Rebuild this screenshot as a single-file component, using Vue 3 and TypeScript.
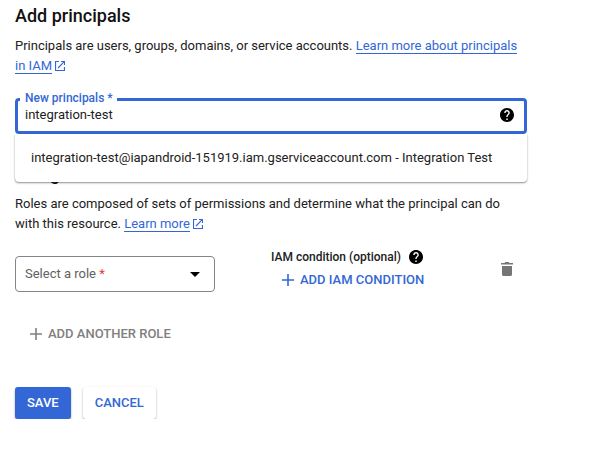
<script setup lang="ts">
import { ref } from 'vue'

const principal = ref<string>('integration-test')
const suggestions: string[] = [
  'integration-test@iapandroid-151919.iam.gserviceaccount.com - Integration Test',
]
</script>

<template>
  <main class="panel">
    <h2 class="title">Add principals</h2>
    <p class="copy intro">
      Principals are users, groups, domains, or service accounts.
      <a class="link">Learn more about principals in IAM</a>
      <svg class="external" viewBox="0 0 10 10"><path d="M4 .5H.5v9h9V6M6 .5h3.500V4M9.300.7 3 7" /></svg>
    </p>

    <div class="field">
      <label class="field-label">New principals *</label>
      <span class="field-value">{{ principal }}</span>
      <svg class="help" viewBox="2 2 20 20"><path d="M12 2C6.480 2 2 6.480 2 12s4.480 10 10 10 10-4.480 10-10S17.520 2 12 2zm1 17h-2v-2h2v2zm2.070-7.750l-.9.920C13.450 12.900 13 13.500 13 15h-2v-.5c0-1.100.450-2.100 1.170-2.830l1.240-1.260c.370-.360.590-.860.590-1.410 0-1.100-.9-2-2-2s-2 .9-2 2H8c0-2.210 1.790-4 4-4s4 1.790 4 4c0 .880-.360 1.680-.930 2.250z" /></svg>
      <ul class="suggestions">
        <li v-for="item in suggestions" :key="item">{{ item }}</li>
      </ul>
    </div>

    <h2 class="title roles-title">Assign roles</h2>
    <p class="copy roles-copy">
      Roles are composed of sets of permissions and determine what the principal can do with this resource.
      <a class="link">Learn more</a>
      <svg class="external" viewBox="0 0 10 10"><path d="M4 .5H.5v9h9V6M6 .5h3.500V4M9.300.7 3 7" /></svg>
    </p>

    <div class="role-row">
      <div class="select">
        <span class="select-text">Select a role <b>*</b></span>
        <svg class="caret" viewBox="0 0 10 5"><path d="M0 0h10L5 5z" /></svg>
      </div>
      <div class="condition">
        <div class="condition-label">
          <span>IAM condition (optional)</span>
          <svg class="help" viewBox="2 2 20 20"><path d="M12 2C6.480 2 2 6.480 2 12s4.480 10 10 10 10-4.480 10-10S17.520 2 12 2zm1 17h-2v-2h2v2zm2.070-7.750l-.9.920C13.450 12.900 13 13.500 13 15h-2v-.5c0-1.100.450-2.100 1.170-2.830l1.240-1.260c.370-.360.590-.860.590-1.410 0-1.100-.9-2-2-2s-2 .9-2 2H8c0-2.210 1.790-4 4-4s4 1.790 4 4c0 .880-.360 1.680-.930 2.250z" /></svg>
        </div>
        <button class="text-button add-condition">
          <svg class="plus" viewBox="0 0 12 12"><path d="M6 0v12M0 6h12" /></svg>
          <span>ADD IAM CONDITION</span>
        </button>
      </div>
      <svg class="trash" viewBox="0 0 12 14"><path d="M1 4h10v8.500c0 .8-.7 1.500-1.500 1.500h-7C1.700 14 1 13.300 1 12.500zM0 1h3.500l1-1h3l1 1H12v1.500H0z" /></svg>
    </div>

    <button class="text-button add-role">
      <svg class="plus" viewBox="0 0 12 12"><path d="M6 0v12M0 6h12" /></svg>
      <span>ADD ANOTHER ROLE</span>
    </button>

    <div class="actions">
      <button class="button primary">SAVE</button>
      <button class="button">CANCEL</button>
    </div>
  </main>
</template>

<style>
body {
  background: #fff;
}
</style>

<style scoped>
.panel {
  box-sizing: border-box;
  width: 527px;
  padding: 4px 0 0 15px;
  font-family: Roboto, "Liberation Sans", sans-serif;
  font-size: 13px;
  line-height: 20px;
  color: #212121;
}

.title {
  margin: 0;
  font-size: 18px;
  font-weight: 500;
  line-height: 24px;
  color: #111;
}

.copy {
  margin: 8px 0 0;
}

.intro {
  letter-spacing: -0.007px;
}

.link {
  color: #3367d6;
  border-bottom: 1px solid #3367d6;
}

.external {
  width: 10px;
  height: 10px;
  margin-left: 3px;
  vertical-align: -1px;
  fill: none;
  stroke: #3367d6;
  stroke-width: 1.2;
}

.field {
  position: relative;
  display: flex;
  align-items: center;
  justify-content: space-between;
  box-sizing: border-box;
  height: 36px;
  margin-top: 22px;
  padding: 0 10px 3px 7px;
  border: 3px solid #3367d6;
  border-radius: 4px;
}

.field-label {
  position: absolute;
  top: -12px;
  left: 2px;
  padding: 0 4px 0 5px;
  background: #fff;
  font-size: 12px;
  font-weight: 500;
  line-height: 18px;
  color: #3367d6;
}

.help {
  width: 14px;
  height: 14px;
  fill: #000;
}

.suggestions {
  position: absolute;
  z-index: 1;
  top: 33px;
  right: -3px;
  left: -3px;
  margin: 0;
  padding: 14px 16px;
  border-radius: 0 0 4px 4px;
  background: #fff;
  box-shadow: 0 1px 2px rgba(0, 0, 0, 0.45);
  list-style: none;
  white-space: nowrap;
}

.roles-title {
  margin-top: 28px;
}

.roles-copy {
  margin-top: 8px;
}

.role-row {
  display: flex;
  align-items: flex-start;
  margin-top: 13px;
}

.select {
  display: flex;
  align-items: center;
  justify-content: space-between;
  box-sizing: border-box;
  width: 200px;
  height: 36px;
  margin-top: 9px;
  padding: 0 14px 0 9px;
  border: 1px solid #80868b;
  border-radius: 4px;
}

.select-text {
  color: #616161;
}

.select-text b {
  font-weight: 400;
  color: #e53935;
}

.caret {
  width: 10px;
  height: 5px;
}

.condition {
  margin-left: 56px;
}

.condition-label {
  display: flex;
  align-items: center;
  gap: 8px;
  font-size: 12px;
  font-weight: 500;
}

.text-button {
  display: flex;
  align-items: center;
  gap: 6px;
  padding: 0;
  border: 0;
  background: none;
  font: 500 13px/20px Roboto, sans-serif;
  color: #3367d6;
}

.plus {
  width: 12px;
  height: 12px;
  fill: none;
  stroke: currentColor;
  stroke-width: 1.6;
}

.add-condition {
  margin: 3px 0 0 11px;
}

.trash {
  width: 12px;
  height: 14px;
  margin: 15px 14px 0 auto;
  fill: #757575;
}

.add-role {
  margin: 32px 0 0 15px;
  color: #808080;
}

.actions {
  display: flex;
  gap: 12px;
  margin-top: 43px;
}

.button {
  height: 32px;
  padding: 0 12px;
  border: 0;
  border-radius: 3px;
  background: #fff;
  box-shadow: 0 1px 2px rgba(0, 0, 0, 0.4);
  font: 500 13px/32px Roboto, sans-serif;
  color: #3367d6;
}

.primary {
  background: #3367d6;
  color: #fff;
}
</style>
